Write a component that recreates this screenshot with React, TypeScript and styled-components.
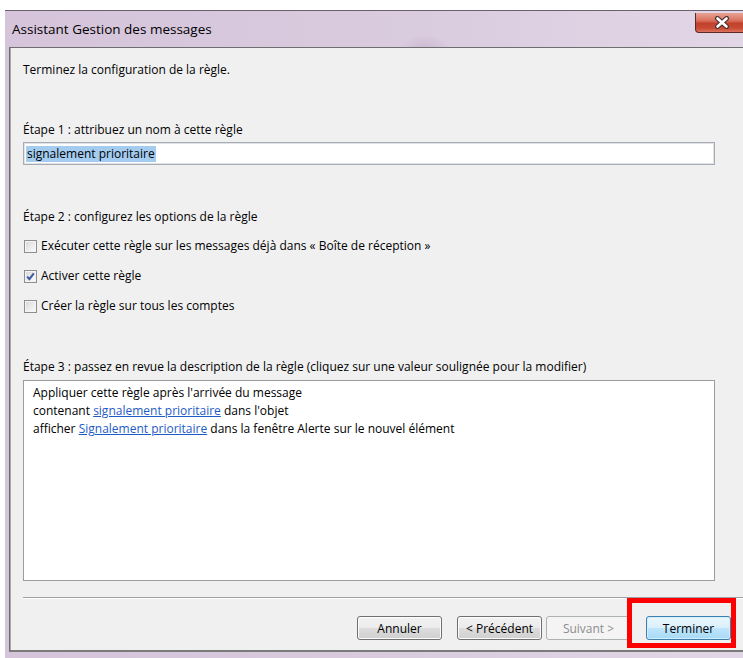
import React from 'react';
import styled, { createGlobalStyle } from 'styled-components';

const GlobalStyle = createGlobalStyle`
	html, body {
		margin: 0;
		padding: 0;
		background: #ffffff;
	}
	body {
		font-family: "Open Sans", "Noto Sans", sans-serif;
		color: #000000;
	}
`;

const Screen = styled.div`
	width: 743px;
	height: 658px;
	overflow: hidden;
	box-sizing: border-box;
	padding: 10px 0 0 5px;
	background: #ffffff;
	display: flex;
`;

const Window = styled.div`
	width: 780px;
	flex-shrink: 0;
	display: flex;
	flex-direction: column;
	border-top: 1px solid #6a6070;
	background:
		radial-gradient(ellipse 38px 30px at 420px 44px, rgba(160, 130, 170, 0.35), transparent 70%),
		linear-gradient(to right, #d5c4da 0%, #d9cade 45%, #e3d8e7 100%);
	padding: 0 0 10px 4px;
`;

const TitleBar = styled.div`
	height: 36px;
	display: flex;
	align-items: flex-start;
`;

const Title = styled.span`
	font-size: 13.5px;
	line-height: 36px;
	margin-left: 3px;
	color: #000000;
`;

const CloseButton = styled.div`
	margin-left: auto;
	margin-right: 38px;
	margin-top: 2px;
	width: 56px;
	height: 20px;
	box-sizing: border-box;
	border: 1px solid #5c2a24;
	border-top: none;
	border-radius: 0 0 0 4px;
	background: linear-gradient(
		to bottom,
		#e8a395 0%,
		#d9705e 40%,
		#c2412c 55%,
		#c84a34 80%,
		#dd7460 100%
	);
	display: flex;
	align-items: center;
	justify-content: flex-start;
	padding-left: 18px;
`;

const Panel = styled.div`
	box-sizing: border-box;
	background: #f0f0f0;
	border-top: 1px solid #6e6e6e;
	border-left: 1px solid #6e6e6e;
	border-bottom: 2px solid #7a7a7a;
	box-shadow: inset 1px 0 0 #a8a8a8;
	padding: 14px 12px 10px 13px;
	display: flex;
	flex-direction: column;
	align-items: flex-start;
	font-size: 12px;
	line-height: 16px;
`;

const Label = styled.div<{ $gap: number }>`
	margin-top: ${(p) => p.$gap}px;
	white-space: nowrap;
`;

const NameInput = styled.div`
	margin-top: 4px;
	width: 692px;
	height: 23px;
	box-sizing: border-box;
	background: #ffffff;
	border: 1px solid #a9abb2;
	box-shadow: inset 0 0 0 1px #dfe3e8;
	display: flex;
	align-items: center;
	padding-left: 2px;
`;

const Selected = styled.span`
	background: #a3ccf0;
	line-height: 16px;
	padding: 0 1px;
`;

const OptionList = styled.div`
	margin-top: 6px;
	display: flex;
	flex-direction: column;
`;

const OptionRow = styled.label`
	height: 30px;
	display: flex;
	align-items: center;
	gap: 4px;
	padding-left: 1px;
	white-space: nowrap;
`;

const CheckBox = styled.span`
	width: 13px;
	height: 13px;
	box-sizing: border-box;
	border: 1px solid #8e8f8f;
	background: linear-gradient(135deg, #d6d6d6 0%, #eeeeee 60%, #fbfbfb 100%);
	box-shadow: inset 0 0 0 1px #f4f4f4;
	display: flex;
	align-items: center;
	justify-content: center;
`;

const Description = styled.div`
	margin-top: 5px;
	width: 692px;
	height: 201px;
	box-sizing: border-box;
	background: #ffffff;
	border: 1px solid #9c9c9c;
	padding: 3px 9px;
	line-height: 18px;
`;

const Link = styled.a`
	color: #1d5cc4;
	text-decoration: underline;
	cursor: pointer;
`;

const Separator = styled.div`
	margin-top: 16px;
	align-self: stretch;
	height: 1px;
	background: #a0a0a0;
	border-bottom: 1px solid #ffffff;
`;

const ButtonRow = styled.div`
	margin-top: 17px;
	width: 708px;
	display: flex;
	justify-content: flex-end;
`;

const Button = styled.button<{ $space?: number; $isDefault?: boolean }>`
	margin-left: ${(p) => p.$space ?? 0}px;
	width: 85px;
	height: 24px;
	box-sizing: border-box;
	border-radius: 3px;
	font-family: inherit;
	font-size: 12px;
	color: #000000;
	padding: 0;
	border: 1px solid ${(p) => (p.$isDefault ? '#3c7fb1' : '#707070')};
	box-shadow: inset 0 0 0 1px ${(p) => (p.$isDefault ? '#d3eefc' : '#fcfcfc')};
	background: ${(p) =>
		p.$isDefault
			? 'linear-gradient(to bottom, #eaf6fd 0%, #d9f0fc 50%, #bee6fd 51%, #a7d9f5 100%)'
			: 'linear-gradient(to bottom, #f2f2f2 0%, #ebebeb 50%, #dddddd 51%, #cfcfcf 100%)'};

	&:disabled {
		color: #8d8d8d;
		border-color: #adb2b5;
		box-shadow: none;
		background: #f4f4f4;
	}
`;

const Highlighted = styled.div`
	position: relative;
	margin-left: 15px;
	display: flex;
`;

// red marker drawn over the finish button
const Marker = styled.span`
	position: absolute;
	left: -19px;
	top: -18px;
	width: 109px;
	height: 50px;
	box-sizing: border-box;
	border: 5px solid #ff0000;
	pointer-events: none;
`;

const CloseGlyph = () => (
	<svg width="16" height="13" viewBox="0 0 16 13">
		<path d="M3.5 2.5 L12.5 10.5 M12.5 2.5 L3.5 10.5" stroke="#4b3330" strokeWidth="5" strokeLinecap="round" />
		<path d="M3.5 2.5 L12.5 10.5 M12.5 2.5 L3.5 10.5" stroke="#ffffff" strokeWidth="2.6" strokeLinecap="round" />
	</svg>
);

const Check = () => (
	<svg width="11" height="11" viewBox="0 0 11 11">
		<path d="M2.2 5.6 L4.4 8.2 L8.8 2.4" fill="none" stroke="#3a58a6" strokeWidth="2" />
	</svg>
);

const options = [
	{ text: 'Exécuter cette règle sur les messages déjà dans « Boîte de réception »', checked: false },
	{ text: 'Activer cette règle', checked: true },
	{ text: 'Créer la règle sur tous les comptes', checked: false },
];

export default function App() {
	return (
		<>
			<GlobalStyle />
			<Screen>
				<Window>
					<TitleBar>
						<Title>Assistant Gestion des messages</Title>
						<CloseButton>
							<CloseGlyph />
						</CloseButton>
					</TitleBar>
					<Panel>
						<Label $gap={0}>Terminez la configuration de la règle.</Label>

						<Label $gap={44}>Étape 1 : attribuez un nom à cette règle</Label>
						<NameInput>
							<Selected>signalement prioritaire</Selected>
						</NameInput>

						<Label $gap={44}>Étape 2 : configurez les options de la règle</Label>
						<OptionList>
							{options.map((o) => (
								<OptionRow key={o.text}>
									<CheckBox>{o.checked && <Check />}</CheckBox>
									{o.text}
								</OptionRow>
							))}
						</OptionList>

						<Label $gap={38}>
							Étape 3 : passez en revue la description de la règle (cliquez sur une valeur soulignée pour la
							modifier)
						</Label>
						<Description>
							<div>Appliquer cette règle après l'arrivée du message</div>
							<div>
								contenant <Link>signalement prioritaire</Link> dans l'objet
							</div>
							<div>
								afficher <Link>Signalement prioritaire</Link> dans la fenêtre Alerte sur le nouvel élément
							</div>
						</Description>

						<Separator />

						<ButtonRow>
							<Button>Annuler</Button>
							<Button $space={15}>&lt; Précédent</Button>
							<Button $space={4} disabled>
								Suivant &gt;
							</Button>
							<Highlighted>
								<Button $isDefault>Terminer</Button>
								<Marker />
							</Highlighted>
						</ButtonRow>
					</Panel>
				</Window>
			</Screen>
		</>
	);
}
